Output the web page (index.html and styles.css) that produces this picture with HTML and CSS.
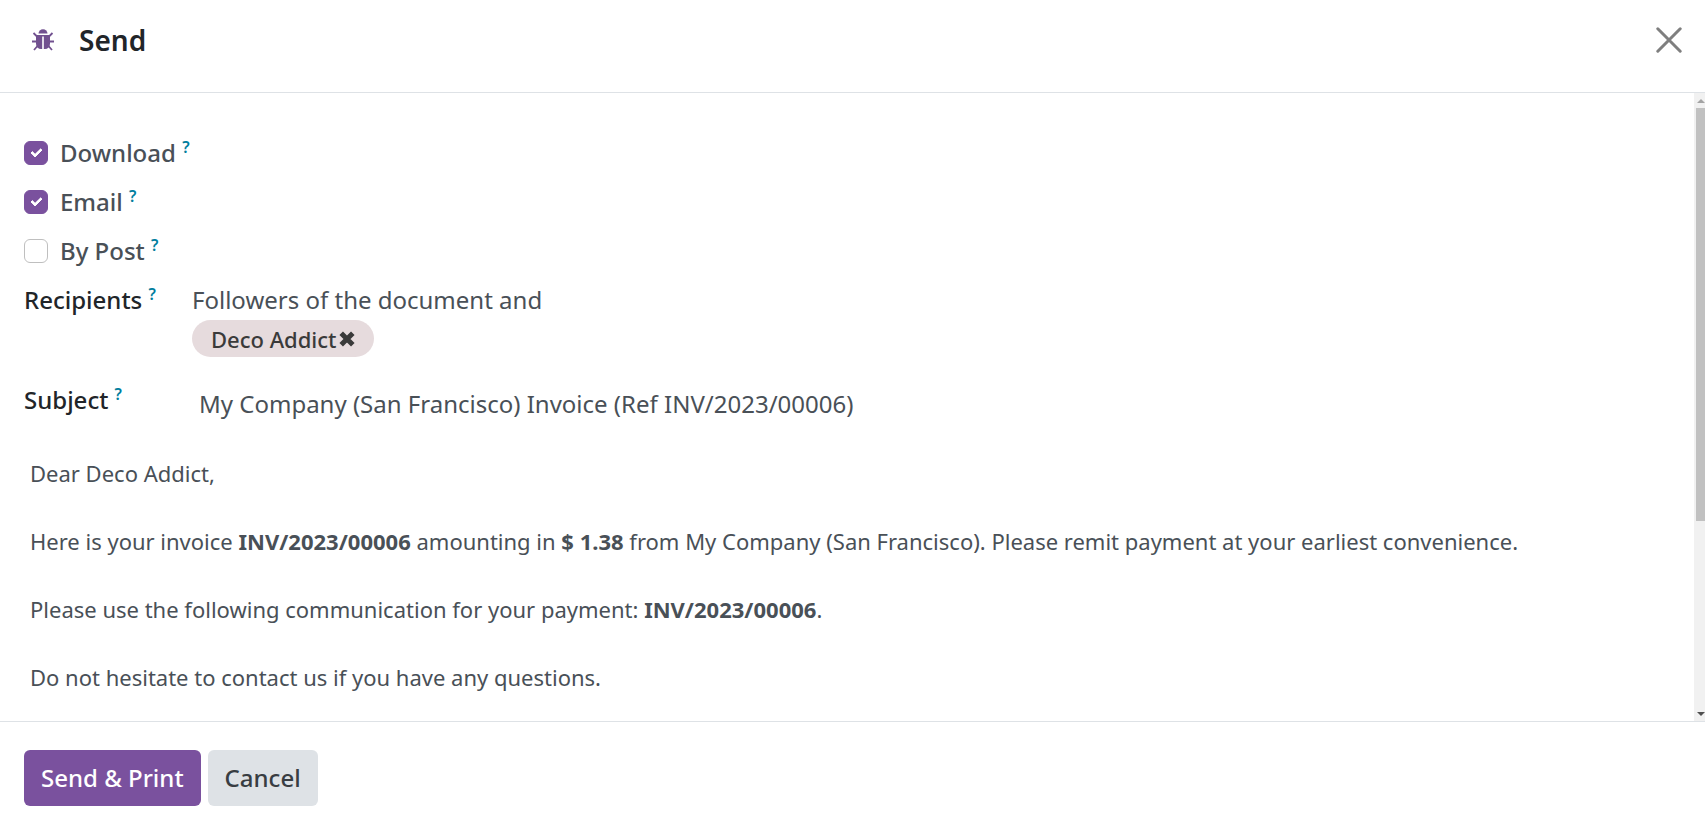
FILE: index.html
```html
<!DOCTYPE html>
<html lang="en">
<head>
    <meta charset="UTF-8">
    <meta name="viewport" content="width=device-width, initial-scale=1.0">
    <title>Send</title>
    <link rel="stylesheet" href="styles.css">
</head>
<body>
    <header class="modal-header">
        <button type="button" class="icon-btn debug" aria-label="Debug">
            <svg width="22" height="22" viewBox="0 0 22 22" fill="#71508f">
                <path d="M6.500 4.500a4.500 4.300 0 0 1 9 0z"/>
                <path d="M4 6h14v8.500a5 5.500 0 0 1-5 5.500h-4a5 5.500 0 0 1-5-5.500z"/>
                <path d="M5 7.500L1.500 4M17 7.500L20.500 4M4 12.500H0M18 12.500h4M5.500 17L2 21M16.500 17L20 21" fill="none" stroke="#71508f" stroke-width="1.800"/>
                <path d="M10.200 7.500h1.600V20h-1.600z" fill="#fff"/>
            </svg>
        </button>
        <h1>Send</h1>
        <button type="button" class="icon-btn close" aria-label="Close">
            <svg width="26" height="26" viewBox="0 0 26 26" fill="none" stroke="#7f7f7f" stroke-width="3" stroke-linecap="round">
                <path d="M1.800 1.800l22.400 22.400M24.200 1.800L1.800 24.200"/>
            </svg>
        </button>
    </header>

    <main class="modal-body">
        <form class="content" id="send-form">
            <div class="check-row">
                <input type="checkbox" id="download" checked>
                <label for="download">Download <sup>?</sup></label>
            </div>
            <div class="check-row">
                <input type="checkbox" id="email" checked>
                <label for="email">Email <sup>?</sup></label>
            </div>
            <div class="check-row">
                <input type="checkbox" id="post">
                <label for="post">By Post <sup>?</sup></label>
            </div>

            <div class="field recipients">
                <span class="field-label">Recipients <sup>?</sup></span>
                <div class="field-value">
                    <div>Followers of the document and</div>
                    <span class="tag">Deco Addict<button type="button" class="icon-btn" aria-label="Remove Deco Addict">
                        <svg width="16" height="16" viewBox="0 0 16 16" fill="none" stroke="#3a3a3a" stroke-width="5">
                            <path d="M2.200 2.200l11.600 11.600M13.800 2.200L2.200 13.800"/>
                        </svg>
                    </button></span>
                </div>
            </div>
            <div class="field subject">
                <label class="field-label" for="subject">Subject <sup>?</sup></label>
                <input type="text" id="subject" value="My Company (San Francisco) Invoice (Ref INV/2023/00006)">
            </div>

            <div class="message">
                <p>Dear Deco Addict,</p>
                <p>Here is your invoice <strong>INV/2023/00006</strong> amounting in <strong>$ 1.38</strong> from My Company (San Francisco). Please remit payment at your earliest convenience.</p>
                <p>Please use the following communication for your payment: <strong>INV/2023/00006</strong>.</p>
                <p>Do not hesitate to contact us if you have any questions.</p>
            </div>
        </form>
        <div class="scrollbar">
            <span class="arrow up"></span>
            <div class="track"><div class="thumb"></div></div>
            <span class="arrow down"></span>
        </div>
    </main>

    <footer class="modal-footer">
        <button type="submit" form="send-form" class="btn primary">Send &amp; Print</button>
        <button type="button" class="btn secondary">Cancel</button>
    </footer>
</body>
</html>
```
FILE: styles.css
```css
* {
    box-sizing: border-box;
}
body {
    margin: 0;
    height: 100vh;
    display: flex;
    flex-direction: column;
    background: #fff;
    color: #495057;
    font-family: "Noto Sans", sans-serif;
    font-size: 24px;
    line-height: 36px;
}
button, input {
    font: inherit;
    color: inherit;
}
svg {
    display: block;
}
.icon-btn {
    padding: 0;
    border: 0;
    background: none;
    cursor: pointer;
}

/* header */
.modal-header {
    display: flex;
    align-items: center;
    padding: 22px 23px 34px 32px;
    border-bottom: 1px solid #dee2e6;
}
.modal-header h1 {
    flex: 1;
    margin: 0 0 0 25px;
    color: #212529;
    font-size: 28px;
    font-weight: 600;
    line-height: 36px;
}

/* body */
.modal-body {
    flex: 1;
    min-height: 0;
    display: flex;
    overflow: hidden;
}
.content {
    flex: 1;
    min-width: 0;
    padding: 42px 24px 0;
}
.check-row {
    display: flex;
    align-items: center;
    height: 36px;
    margin-bottom: 13px;
    font-weight: 500;
}
.check-row input {
    appearance: none;
    width: 24px;
    height: 24px;
    margin: 0 12px 0 0;
    border: 1px solid #bfbfbf;
    border-radius: 6px;
    background: #fff;
}
.check-row input:checked {
    display: grid;
    place-items: center;
    border-color: #7a519e;
    background: #7a519e;
}
.check-row input:checked::before {
    content: '';
    width: 8px;
    height: 4px;
    margin-bottom: 4px;
    border: solid #fff;
    border-width: 0 0 3px 3px;
    border-radius: 1px;
    transform: rotate(-45deg);
}
sup {
    color: #017e9e;
    font-size: 16px;
    font-weight: 600;
    line-height: 0;
}
.field {
    display: grid;
    grid-template-columns: 168px 1fr;
}
.field-label {
    color: #212529;
    font-weight: 500;
}
.recipients {
    margin-bottom: 25px;
}
.tag {
    display: inline-flex;
    align-items: center;
    gap: 2px;
    height: 37px;
    margin-top: 2px;
    padding: 0 19px;
    border-radius: 19px;
    background: #e6dbdd;
    color: #3a3a3a;
    font-size: 22px;
    font-weight: 500;
    vertical-align: top;
}
.subject input {
    width: 100%;
    height: 42px;
    padding: 0 7px;
    border: 0;
    background: none;
}
.message {
    padding: 32px 6px;
    font-size: 22px;
    line-height: 34px;
}
.message p {
    margin: 0 0 34px;
}

/* scrollbar */
.scrollbar {
    width: 11px;
    display: flex;
    flex-direction: column;
    padding-left: 2px;
    background: #f1f1f1;
}
.arrow {
    height: 15px;
    display: grid;
    place-items: center;
}
.arrow::before {
    content: '';
    border: 4px solid transparent;
}
.arrow.up::before {
    border-top: 0;
    border-bottom-color: #a3a3a3;
}
.arrow.down::before {
    border-bottom: 0;
    border-top-color: #505050;
}
.track {
    flex: 1;
}
.thumb {
    height: 69%;
    background: #c1c1c1;
}

/* footer */
.modal-footer {
    display: flex;
    gap: 7px;
    padding: 28px 24px 24px;
    border-top: 1px solid #dee2e6;
}
.btn {
    height: 56px;
    padding: 0 17px;
    border: 0;
    border-radius: 6px;
    font-weight: 500;
    cursor: pointer;
}
.primary {
    background: #7a519e;
    color: #fff;
}
.secondary {
    background: #dee2e6;
    color: #383d42;
}
```
